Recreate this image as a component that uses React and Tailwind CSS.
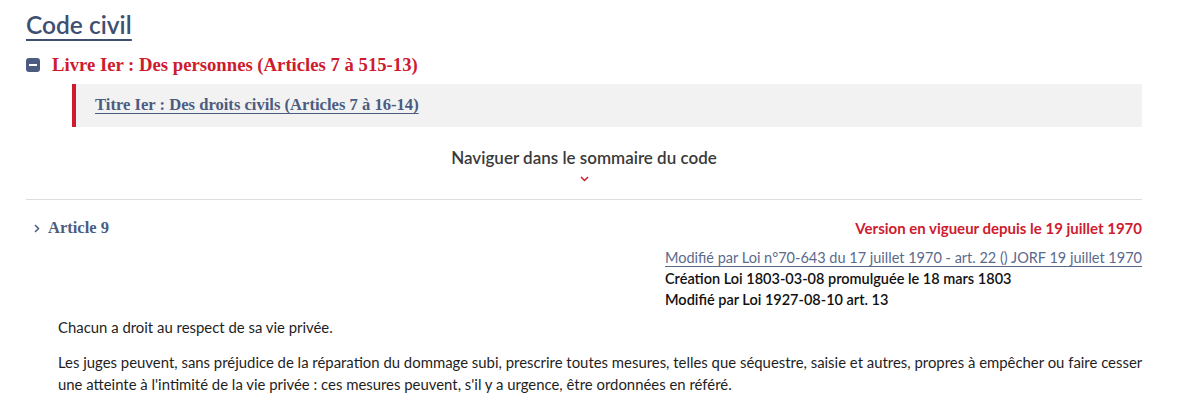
import React from "react";

export default function App() {
  return (
    <div className="w-[1200px] h-[402px] bg-white overflow-hidden font-['Lato',sans-serif]">
      <div className="ml-[26px] w-[1116px] pt-[8px]">
        <h1 className="text-[24.5px] leading-[34px] font-semibold text-[#3f4f72] underline underline-offset-[5px] decoration-[1.5px]">
          <a href="#">Code civil</a>
        </h1>
        <div className="mt-[11px] flex items-center gap-[12px]">
          <span className="w-[14px] h-[14px] rounded-[3px] bg-[#4b5c80] flex items-center justify-center">
            <span className="w-[8px] h-[2px] bg-white" />
          </span>
          <span className="font-['Liberation_Serif',serif] font-bold text-[18.7px] leading-[24px] text-[#ce1b2e]">
            Livre Ier : Des personnes (Articles 7 à 515-13)
          </span>
        </div>
        <div className="ml-[46px] mt-[7px] h-[43px] bg-[#f2f2f2] border-l-[4px] border-[#ce1b2e] flex items-center pl-[19px]">
          <a href="#" className="font-['Liberation_Serif',serif] font-bold text-[16.6px] text-[#4b5c80] underline underline-offset-[3px]">
            Titre Ier : Des droits civils (Articles 7 à 16-14)
          </a>
        </div>
        <div className="flex flex-col items-center pt-[21px] h-[73px] border-b border-[#dddddd]">
          <span className="text-[17px] leading-[20px] font-semibold text-[#3a3a3a]">Naviguer dans le sommaire du code</span>
          <svg className="mt-[8px]" width="9" height="6" viewBox="0 0 9 6" fill="none">
            <path d="M1 1l3.5 3.5L8 1" stroke="#ce1b2e" strokeWidth="1.5" />
          </svg>
        </div>
        <div className="flex justify-between items-center mt-[16px] pl-[8px]">
          <div className="flex items-center gap-[8px]">
            <svg width="6" height="9" viewBox="0 0 6 9" fill="none">
              <path d="M1 1l3.5 3.5L1 8" stroke="#4b5c80" strokeWidth="1.5" />
            </svg>
            <span className="font-['Liberation_Serif',serif] font-bold text-[16.5px] text-[#4b5c80]">Article 9</span>
          </div>
          <span className="text-[15px] font-bold text-[#ce1b2e]">Version en vigueur depuis le 19 juillet 1970</span>
        </div>
        <div className="flex justify-end mt-[6px]">
          <div className="text-[14.5px] leading-[21px] font-semibold text-[#111]">
            <a href="#" className="block font-normal text-[#5a6a8d] underline underline-offset-[3px]">
              Modifié par Loi n°70-643 du 17 juillet 1970 - art. 22 () JORF 19 juillet 1970
            </a>
            <div>Création Loi 1803-03-08 promulguée le 18 mars 1803</div>
            <div>Modifié par Loi 1927-08-10 art. 13</div>
          </div>
        </div>
        <div className="pl-[32px] mt-[6px] text-[14.9px] leading-[22px] text-[#1e1e1e]">
          <p>Chacun a droit au respect de sa vie privée.</p>
          <p className="mt-[13px]">
            Les juges peuvent, sans préjudice de la réparation du dommage subi, prescrire toutes mesures, telles que séquestre, saisie et autres, propres à empêcher ou faire cesser une atteinte à l'intimité de la vie privée : ces mesures peuvent, s'il y a urgence, être ordonnées en référé.
          </p>
        </div>
      </div>
    </div>
  );
}
